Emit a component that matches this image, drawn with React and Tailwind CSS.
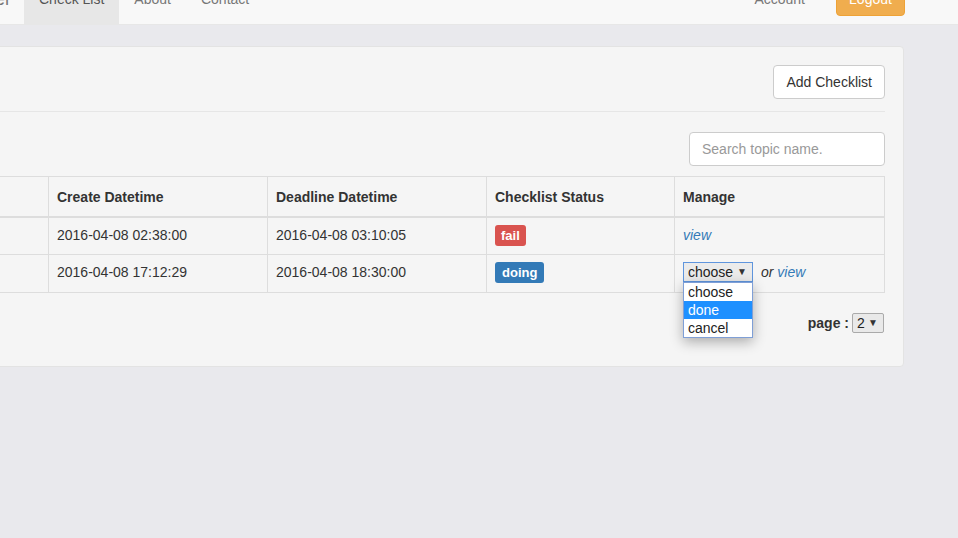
import React from "react";

const rows = [
  { created: "2016-04-08 02:38:00", deadline: "2016-04-08 03:10:05", status: "fail" },
  { created: "2016-04-08 17:12:29", deadline: "2016-04-08 18:30:00", status: "doing" },
];

function StatusLabel({ status }) {
  const color = status === "fail" ? "bg-[#d9534f] px-[6px]" : "bg-[#337ab7] px-[7px]";
  return (
    <span className={`inline-block rounded-[3px] ${color} align-top text-[13px] font-bold leading-[21px] text-white`}>
      {status}
    </span>
  );
}

function FakeSelect({ value, width, focused }) {
  return (
    <div
      className={`inline-flex h-[20px] ${width} items-center justify-between border pl-[4px] pr-[5px] text-[14px] leading-[18px] text-[#222] ${
        focused ? "border-[#5f95dd] bg-[#ebebeb]" : "rounded-[2px] border-[#aaa] bg-[#e9e9e9]"
      }`}
    >
      <span>{value}</span>
      <span className="text-[10px] text-[#333]">▼</span>
    </div>
  );
}

const th = "border border-b-2 border-[#ddd] px-[8px] pt-[10px] align-top text-left leading-[20px]";
const td = "border border-[#ddd] px-[8px] pt-[7px] align-top leading-[20px]";

export default function App() {
  return (
    <div className="h-[538px] w-[958px] overflow-hidden bg-[#e9e9ed] font-['Liberation_Sans',Arial,sans-serif] text-[14px] text-[#333]">
      <div className="-mt-[26px]">
        {/* navbar */}
        <nav className="flex h-[51px] border-b border-[#e7e7e7] bg-[#f8f8f8] text-[#777]">
          <div className="-ml-[56px] w-[80px] py-[15px] pr-[15px] text-right text-[18px] leading-[20px]">Checker</div>
          <div className="bg-[#e7e7e7] px-[15px] py-[15px] leading-[20px] text-[#555]">Check List</div>
          <div className="px-[15px] py-[15px] leading-[20px]">About</div>
          <div className="px-[15px] py-[15px] leading-[20px]">Contact</div>
          <div className="flex-1" />
          <div className="px-[15px] py-[15px] leading-[20px]">Account</div>
          <button className="ml-[16px] mr-[53px] mt-[8px] h-[34px] w-[69px] rounded-[4px] border border-[#eea236] bg-[#f0ad4e] text-white">
            Logout
          </button>
        </nav>

        {/* panel */}
        <div className="-ml-[20px] mr-[54px] mt-[21px] rounded-[4px] border border-[#e3e3e3] bg-[#f5f5f5] pb-[32px] pr-[18px] pt-[18px]">
          <div className="flex justify-end">
            <button className="h-[34px] rounded-[4px] border border-[#ccc] bg-white px-[12px] text-[#333]">
              Add Checklist
            </button>
          </div>
          <div className="mt-[12px] border-t border-[#e6e6e6]" />

          <div className="mt-[20px] flex justify-end">
            <input
              className="h-[34px] w-[196px] rounded-[4px] border border-[#ccc] bg-white px-[12px] text-[14px] placeholder:text-[#999]"
              placeholder="Search topic name."
            />
          </div>

          <table className="mt-[10px] w-full table-fixed border-collapse border border-[#ddd]">
            <colgroup>
              <col className="w-[67px]" />
              <col className="w-[219px]" />
              <col className="w-[219px]" />
              <col className="w-[188px]" />
              <col />
            </colgroup>
            <thead>
              <tr className="h-[40px]">
                <th className={th} />
                <th className={th}>Create Datetime</th>
                <th className={th}>Deadline Datetime</th>
                <th className={th}>Checklist Status</th>
                <th className={th}>Manage</th>
              </tr>
            </thead>
            <tbody>
              {rows.map((row, i) => (
                <tr key={i} className="h-[38px]">
                  <td className={td} />
                  <td className={td}>{row.created}</td>
                  <td className={td}>{row.deadline}</td>
                  <td className={td}>
                    <StatusLabel status={row.status} />
                  </td>
                  <td className={td}>
                    {i === 0 ? (
                      <span className="italic text-[#337ab7]">view</span>
                    ) : (
                      <div className="relative flex items-center">
                        <FakeSelect value="choose" width="w-[70px]" focused />
                        <span className="ml-[8px] italic">
                          or <span className="text-[#337ab7]">view</span>
                        </span>
                        {/* open dropdown */}
                        <div className="absolute left-0 top-[20px] z-10 w-[70px] border border-[#7f9fd6] bg-white text-[14px] leading-[18px] text-[#222] shadow-[0_4px_12px_rgba(0,0,0,0.3)]">
                          <div className="pl-[4px]">choose</div>
                          <div className="bg-[#1e90ff] pl-[4px] text-white">done</div>
                          <div className="pl-[4px]">cancel</div>
                        </div>
                      </div>
                    )}
                  </td>
                </tr>
              ))}
            </tbody>
          </table>

          <div className="mr-[1px] mt-[20px] flex items-center justify-end">
            <span className="font-bold">page :</span>
            <div className="ml-[3px]">
              <FakeSelect value="2" width="w-[32px]" />
            </div>
          </div>
        </div>
      </div>
    </div>
  );
}
